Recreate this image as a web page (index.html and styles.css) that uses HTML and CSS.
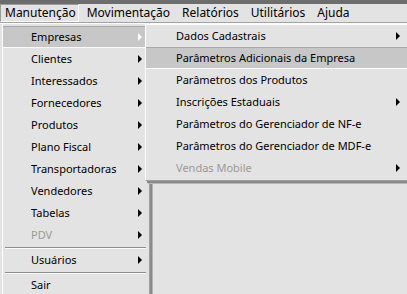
FILE: index.html
```html
<!DOCTYPE html>
<html lang="pt-BR">
<head>
    <meta charset="UTF-8">
    <title>Manutenção</title>
    <link rel="stylesheet" href="styles.css">
</head>
<body>

    <div class="titlebar"></div>

    <!-- Main menu bar -->
    <div class="menubar">
        <div class="bar-item open">Manutenção</div>
        <div class="bar-item">Movimentação</div>
        <div class="bar-item">Relatórios</div>
        <div class="bar-item">Utilitários</div>
        <div class="bar-item">Ajuda</div>
    </div>

    <!-- Manutenção dropdown -->
    <div class="menu main-menu">
        <div class="item active sub">Empresas</div>
        <div class="item sub">Clientes</div>
        <div class="item sub">Interessados</div>
        <div class="item sub">Fornecedores</div>
        <div class="item sub">Produtos</div>
        <div class="item sub">Plano Fiscal</div>
        <div class="item sub">Transportadoras</div>
        <div class="item sub">Vendedores</div>
        <div class="item sub">Tabelas</div>
        <div class="item sub disabled">PDV</div>
        <div class="separator"></div>
        <div class="item sub">Usuários</div>
        <div class="separator"></div>
        <div class="item">Sair</div>
    </div>

    <!-- Empresas submenu -->
    <div class="menu sub-menu">
        <div class="item sub">Dados Cadastrais</div>
        <div class="item active">Parâmetros Adicionais da Empresa</div>
        <div class="item">Parâmetros dos Produtos</div>
        <div class="item sub">Inscrições Estaduais</div>
        <div class="item">Parâmetros do Gerenciador de NF-e</div>
        <div class="item">Parâmetros do Gerenciador de MDF-e</div>
        <div class="item sub disabled">Vendas Mobile</div>
    </div>

</body>
</html>
```

FILE: styles.css
```css
body {
    margin: 0;
    width: 407px;
    height: 294px;
    overflow: hidden;
    position: relative;
    background: #e3e3e3;
    font-family: 'Noto Sans', sans-serif;
    font-size: 11px;
    color: #000;
}
.titlebar {
    height: 4px;
    background: #6d6d6d;
}
.menubar {
    display: flex;
    height: 18px;
    border-bottom: 1px solid #a3a3a3;
    box-shadow: 0 1px 0 #fbfbfb;
    font-size: 12px;
}
.bar-item {
    padding: 0 6px;
    line-height: 18px;
}
.bar-item.open {
    padding: 0 2px 0 4px;
    line-height: 16px;
    border: 1px solid;
    border-color: #9c9c9c #fdfdfd #fdfdfd #9c9c9c;
    margin-right: 2px;
}

/* Dropdown menus */
.menu {
    position: absolute;
    background: #e3e3e3;
    border: 1px solid;
    border-color: #fdfdfd #a0a0a0 #a0a0a0 #fdfdfd;
    box-shadow: 2px 2px 0 #8a8a8a, 3px 3px 0 #b4b4b4;
}
.main-menu {
    left: 2px;
    top: 23px;
    width: 146px;
    height: 300px;
    padding-top: 2px;
}
.sub-menu {
    left: 145px;
    top: 24px;
    width: 280px;
    padding-bottom: 1px;
}
.item {
    position: relative;
    height: 22px;
    line-height: 21px;
    padding-left: 28px;
    white-space: nowrap;
}
.sub-menu .item {
    padding-left: 30px;
}
.item.active {
    background: #c7c7c7;
    border-top: 1px solid #a9a9a9;
    border-bottom: 1px solid #fafafa;
    height: 20px;
    line-height: 19px;
}
.item.disabled {
    color: #9a9a9a;
}
.item.sub::after {
    content: "";
    position: absolute;
    right: 7px;
    top: 7px;
    border-left: 4px solid #000;
    border-top: 4px solid transparent;
    border-bottom: 4px solid transparent;
}
.item.active.sub::after {
    top: 6px;
    border-left-color: #fff;
}
.sub-menu .item.sub::after {
    right: 26px;
}
.separator {
    height: 1px;
    margin: 1px 3px 0 2px;
    background: #8e8e8e;
    border-bottom: 1px solid #fbfbfb;
}
```
